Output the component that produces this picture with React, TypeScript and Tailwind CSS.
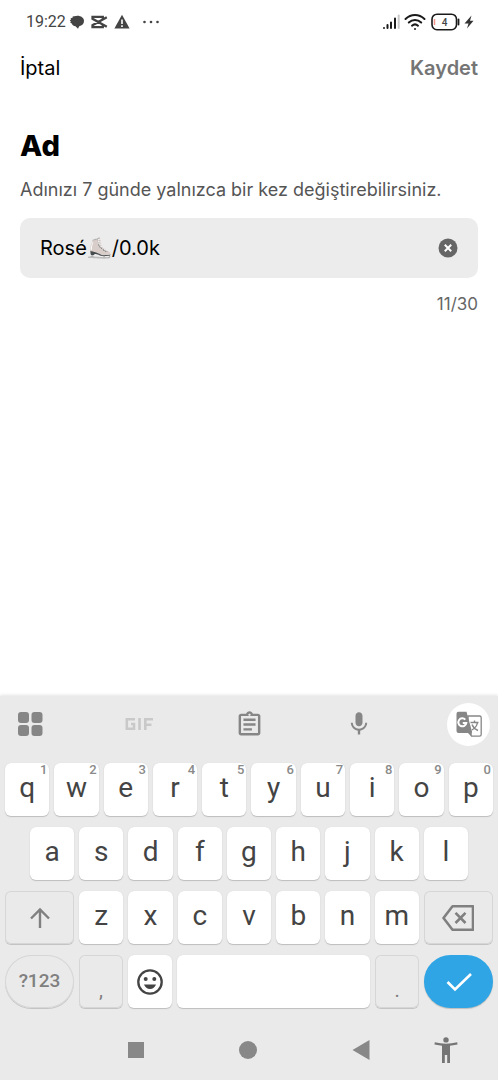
import React, { useState } from "react";

const topKeys = ["q", "w", "e", "r", "t", "y", "u", "i", "o", "p"];
const homeKeys = ["a", "s", "d", "f", "g", "h", "j", "k", "l"];
const lowerKeys = ["z", "x", "c", "v", "b", "n", "m"];

const keyBase = "relative flex h-[53px] min-w-0 items-center justify-center";
const lightKey = `${keyBase} rounded-md bg-white text-[#444] shadow-[0_1px_1px_#bdbdbd,0_0_1px_#cfcfcf]`;
const greyKey = `${keyBase} bg-[#eaeaea] text-[#808080] shadow-[inset_0_0_0_1px_#d6d6d6,0_1px_0_#c4c4c4]`;

function LetterKey({ letter, hint }: { letter: string; hint?: string }) {
  return (
    <button type="button" className={`${lightKey} flex-[16]`}>
      <span className="pb-1 text-[28px] leading-8">{letter}</span>
      {hint && (
        <span className="absolute -top-px right-[2px] text-[13px] leading-4 font-medium text-[#8a8a8a]">{hint}</span>
      )}
    </button>
  );
}

function StatusBar() {
  return (
    <div className="flex h-11 items-center justify-between pr-6 pl-[26px] font-[Roboto,sans-serif] text-[#444]">
      <div className="flex items-center">
        <span className="text-[16px] leading-5">19:22</span>
        <svg className="ml-[3px] h-4 w-4" viewBox="0 0 16 16" fill="currentColor">
          <path d="M8.500 1.800C12 1.800 15 4 15 7c0 2.800-2 4.700-4.800 5.200L9 14.700 6.500 12.300C4.500 12 3 10.800 2.500 9.200L1 8.200 2 7.500.7 6.400 2 5.600 1.500 4.500 4 3.300 3.500 2.600z" />
        </svg>
        <svg className="ml-[5px] h-4 w-[18px]" viewBox="0 0 18 16" fill="none" stroke="currentColor" strokeWidth="2.300">
          <path d="M16.800 12.800 2.500 4.800V2.800H12.800V4.800M16.800 3.200 2.500 11.200V13.200H12.800V11.200" />
        </svg>
        <svg className="ml-[6px] h-4 w-4" viewBox="0 0 16 16">
          <path d="M8 .7 15.600 14.500H.4z" fill="currentColor" />
          <path d="M8 5.500v4.500M8 11.300v1.700" stroke="white" strokeWidth="1.600" />
        </svg>
        <svg className="ml-3 h-4 w-5" viewBox="0 0 20 16" fill="currentColor">
          <circle cx="2.500" cy="8" r="1.300" />
          <circle cx="9" cy="8" r="1.300" />
          <circle cx="15.500" cy="8" r="1.300" />
        </svg>
      </div>
      <div className="flex items-center text-[#1a1a1a]">
        <svg className="h-4 w-[18px]" viewBox="0 0 18 16" strokeWidth="2" stroke="currentColor" strokeLinecap="round">
          <path d="M2 14v.1M5.500 11v3M9 8.500V14M13 4.500V14" />
          <path d="M16.700 1.500V14" stroke="#c9c9c9" />
        </svg>
        <svg className="ml-1 h-[18px] w-[22px]" viewBox="0 0 22 18" fill="none" stroke="currentColor" strokeWidth="2" strokeLinecap="round">
          <path d="M1.500 6C7 .7 15 .7 20.500 6M4.800 9.500c3.600-3.400 8.800-3.400 12.400 0M8 12.700c1.800-1.600 4.200-1.600 6 0" />
          <circle cx="11" cy="16" r="1" fill="currentColor" stroke="none" />
        </svg>
        <svg className="ml-[5px] h-[18px] w-[29px]" viewBox="0 0 29 18">
          <rect x="1" y="1.200" width="24.500" height="15.500" rx="5" fill="none" stroke="currentColor" strokeWidth="1.600" />
          <path d="M27.500 6.500v5" stroke="currentColor" strokeWidth="1.800" strokeLinecap="round" />
          <path d="M3.500 6v6" stroke="#f3958a" strokeWidth="1.500" />
          <text x="13.500" y="12.500" textAnchor="middle" fontSize="10" fontWeight="500" fill="#444">4</text>
        </svg>
        <svg className="ml-1 h-4 w-[10px]" viewBox="0 0 10 16" fill="#333">
          <path d="M7.500 1.500.5 9.500H4.500L3 14.500 9.500 6.800H6z" />
        </svg>
      </div>
    </div>
  );
}

const toolButton = "flex h-[43px] w-[43px] items-center justify-center rounded-full";

function Toolbar() {
  return (
    <div className="flex h-14 items-center justify-between px-2 text-[#868686]">
      <button type="button" aria-label="Menü" className={toolButton}>
        <svg className="h-[26px] w-[26px]" viewBox="0 0 26 26" fill="currentColor">
          <rect x="1" y="1" width="11" height="11" rx="3" />
          <rect x="14.500" y="1" width="11" height="11" rx="3" />
          <rect x="1" y="14" width="11" height="11" rx="3" />
          <rect x="14.500" y="14" width="11" height="11" rx="3" />
        </svg>
      </button>
      <button type="button" aria-label="GIF" className={toolButton}>
        <svg className="h-4 w-[30px]" viewBox="0 0 30 16" fill="none" stroke="#c9c9c9" strokeWidth="2.600">
          <path d="M11 3.300H2.800V12.700H10V8H7M15.500 2v12M21.300 14V3.300H29M21.300 8.700H27.500" />
        </svg>
      </button>
      <button type="button" aria-label="Pano" className={toolButton}>
        <svg className="h-[29px] w-[29px]" viewBox="0 0 24 24" fill="currentColor">
          <path d="M19 3h-4.180C14.400 1.840 13.300 1 12 1s-2.400.84-2.820 2H5c-1.100 0-2 .9-2 2v14c0 1.100.9 2 2 2h14c1.100 0 2-.9 2-2V5c0-1.100-.9-2-2-2zm-7 0c.55 0 1 .45 1 1s-.45 1-1 1-1-.45-1-1 .45-1 1-1zm7 16H5V5h14v14zM7 15h7v2H7zm0-4h10v2H7zm0-4h10v2H7z" />
        </svg>
      </button>
      <button type="button" aria-label="Sesle yazma" className={toolButton}>
        <svg className="h-7 w-7" viewBox="0 0 24 24" fill="currentColor">
          <path d="M12 14c1.660 0 3-1.340 3-3V5c0-1.660-1.340-3-3-3S9 3.340 9 5v6c0 1.660 1.340 3 3 3zm5.300-3c0 3-2.540 5.100-5.300 5.100S6.700 14 6.700 11H5c0 3.410 2.720 6.230 6 6.720V21h2v-3.280c3.280-.48 6-3.300 6-6.720h-1.700z" />
        </svg>
      </button>
      <button type="button" aria-label="Çeviri" className={`${toolButton} bg-white`}>
        <svg className="h-[26px] w-[26px]" viewBox="0 0 26 26">
          <path d="M12 5h11.500a1.700 1.700 0 0 1 1.700 1.700V23.500a1.700 1.700 0 0 1-1.700 1.700H15.500L12 20z" fill="white" stroke="currentColor" strokeWidth="1.300" />
          <path d="M2.500.7h8L16 20.500l-.5 4.500-3.500-3H2.500a2 2 0 0 1-2-2v-17.300a2 2 0 0 1 2-2z" fill="currentColor" />
          <path d="M9.300 8.600A4 4 0 1 0 10.300 12H6.800" fill="none" stroke="white" strokeWidth="2" />
          <path d="M14.500 11.500h8M18.500 9.500v2M21.500 11.500c-.5 3-3 6-5.500 7.500M16 13.500c1 2.500 3.500 5 6 6" fill="none" stroke="currentColor" strokeWidth="1.400" />
        </svg>
      </button>
    </div>
  );
}

function Keyboard() {
  return (
    <section aria-label="Klavye" className="bg-[#eaeaea] font-[Roboto,sans-serif] shadow-[0_-1px_3px_#e4e4e4]">
      <Toolbar />
      <div className="flex flex-col gap-[11px] px-[5px] pt-[11px]">
        <div className="flex gap-[5px]">
          {topKeys.map((k, i) => (
            <LetterKey key={k} letter={k} hint={String((i + 1) % 10)} />
          ))}
        </div>
        <div className="flex gap-[5px] px-[25px]">
          {homeKeys.map((k) => (
            <LetterKey key={k} letter={k} />
          ))}
        </div>
        <div className="flex gap-[5px]">
          <button type="button" aria-label="Shift" className={`${greyKey} flex-[25] rounded-md`}>
            <svg className="h-6 w-6" viewBox="0 0 24 24" fill="none" stroke="currentColor" strokeWidth="2.400">
              <path d="M12 22V3.500M3 12.500l9-9 9 9" />
            </svg>
          </button>
          {lowerKeys.map((k) => (
            <LetterKey key={k} letter={k} />
          ))}
          <button type="button" aria-label="Sil" className={`${greyKey} flex-[25] rounded-md`}>
            <svg className="h-7 w-8" viewBox="0 0 32 28" fill="none" stroke="currentColor" strokeWidth="2.600" strokeLinejoin="round">
              <path d="M10.500 2.300H31V25.700H10.500L1.500 14z" />
              <path d="M13.500 8.800 23.500 19M23.500 8.800 13.500 19" />
            </svg>
          </button>
        </div>
        <div className="flex gap-[5px]">
          <button type="button" className={`${greyKey} flex-[25] rounded-full text-[19px] font-medium`}>
            ?123
          </button>
          <button type="button" className={`${greyKey} flex-[16] rounded-md pt-4 text-[20px]`}>
            ,
          </button>
          <button type="button" aria-label="Emoji" className={`${lightKey} flex-[16]`}>
            <svg className="h-[26px] w-[26px]" viewBox="0 0 26 26" fill="currentColor">
              <circle cx="13" cy="13" r="11.700" fill="none" stroke="currentColor" strokeWidth="2.300" />
              <circle cx="8.700" cy="10" r="2" />
              <circle cx="17.300" cy="10" r="2" />
              <path d="M7 15.500h12c-1 2.700-3.200 4.500-6 4.500s-5-1.800-6-4.500z" />
            </svg>
          </button>
          <button type="button" aria-label="Boşluk" className={`${lightKey} flex-[70]`} />
          <button type="button" className={`${greyKey} flex-[16] rounded-md pt-4 text-[20px]`}>
            .
          </button>
          <button type="button" aria-label="Bitti" className={`${keyBase} flex-[25] rounded-full bg-[#2fa5e5] text-white shadow-[0_1px_1px_#bdbdbd]`}>
            <svg className="h-5 w-7" viewBox="0 0 28 20" fill="none" stroke="currentColor" strokeWidth="2.600">
              <path d="M2.500 10 10 17.500 26 2" />
            </svg>
          </button>
        </div>
      </div>
      <nav className="flex h-[72px] items-center justify-between pt-3 pr-10 pl-[128px]">
        <button type="button" aria-label="Son uygulamalar" className="h-4 w-4 bg-[#888]" />
        <button type="button" aria-label="Ana ekran" className="ml-5 h-[18px] w-[18px] rounded-full bg-[#888]" />
        <button type="button" aria-label="Geri" className="ml-5">
          <svg className="h-5 w-[18px]" viewBox="0 0 18 20" fill="#888">
            <path d="M.5 10 17.500 0V20z" />
          </svg>
        </button>
        <button type="button" aria-label="Erişilebilirlik" className="-ml-[11px]">
          <svg className="h-[26px] w-6" viewBox="0 0 24 26" fill="#757575">
            <circle cx="12" cy="2.900" r="2.700" />
            <path d="M.8 5.300C8 7.200 16 7.200 23.200 5.300L23.500 7.400 16 8.800V26H13.200V18H10.800V26H8V8.800L.5 7.400z" />
          </svg>
        </button>
      </nav>
    </section>
  );
}

export default function App() {
  const [name, setName] = useState("Rosé⛸️/0.0k");
  return (
    <div className="flex min-h-screen flex-col bg-white font-[Inter,sans-serif] text-black">
      <StatusBar />
      <header className="flex h-12 items-center justify-between px-5 text-[20px] leading-6">
        <button type="button">İptal</button>
        <button type="button" className="font-semibold text-[#757575]">Kaydet</button>
      </header>
      <main className="flex-1 px-5 pt-[38px]">
        <h1 className="text-[29px] leading-8 font-extrabold">Ad</h1>
        <label htmlFor="name" className="mt-4 block text-[18px] leading-6 text-[#555]">
          Adınızı 7 günde yalnızca bir kez değiştirebilirsiniz.
        </label>
        <div className="mt-4 flex h-[60px] items-center rounded-[10px] bg-[#ececec] px-5">
          <input
            id="name"
            value={name}
            maxLength={30}
            onChange={(e) => setName(e.target.value)}
            className="min-w-0 flex-1 bg-transparent text-[20px] leading-6 outline-none"
          />
          <button type="button" aria-label="Temizle" onClick={() => setName("")}>
            <svg className="h-5 w-5" viewBox="0 0 20 20">
              <circle cx="10" cy="10" r="9.500" fill="#666" />
              <path d="M6.800 6.800l6.400 6.400M13.200 6.800l-6.400 6.400" stroke="white" strokeWidth="2" />
            </svg>
          </button>
        </div>
        <p className="mt-4 text-right text-[17px] leading-5 text-[#666]">{name.length}/30</p>
      </main>
      <Keyboard />
    </div>
  );
}
